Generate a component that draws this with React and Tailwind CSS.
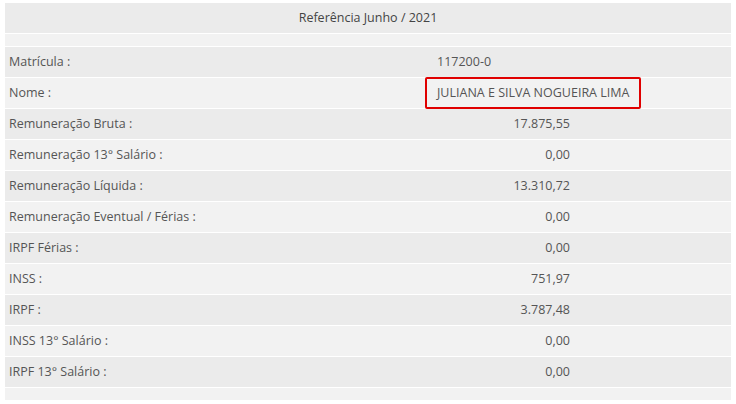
import React from "react";

const rows = [
  ["Matrícula :", "117200-0", "left"],
  ["Nome :", "JULIANA E SILVA NOGUEIRA LIMA", "left"],
  ["Remuneração Bruta :", "17.875,55", "right"],
  ["Remuneração 13° Salário :", "0,00", "right"],
  ["Remuneração Líquida :", "13.310,72", "right"],
  ["Remuneração Eventual / Férias :", "0,00", "right"],
  ["IRPF Férias :", "0,00", "right"],
  ["INSS :", "751,97", "right"],
  ["IRPF :", "3.787,48", "right"],
  ["INSS 13° Salário :", "0,00", "right"],
  ["IRPF 13° Salário :", "0,00", "right"],
];

export default function App() {
  return (
    <div
      className="w-[736px] h-[404px] bg-white overflow-hidden text-[12.5px] text-[#555]"
      style={{ fontFamily: '"Open Sans", "Noto Sans", sans-serif' }}
    >
      <div className="relative mx-[5px] mt-[3px] flex flex-col gap-px">
        <div className="h-[30px] bg-[#ebebeb] flex items-center justify-center text-[#444]">
          Referência Junho / 2021
        </div>
        <div className="h-[12px] bg-[#f2f2f2]" />
        {rows.map(([label, value, align], i) => (
          <div
            key={label}
            className={`h-[30px] flex items-center ${i % 2 === 0 ? "bg-[#ebebeb]" : "bg-[#f2f2f2]"}`}
          >
            <div className="w-[427px] pl-[4px] whitespace-nowrap">{label}</div>
            <div
              className={`w-[138px] whitespace-nowrap ${align === "right" ? "text-right" : "pl-[5px]"}`}
            >
              {value}
            </div>
          </div>
        ))}
        <div className="h-[12px] bg-[#f2f2f2]" />
        <div className="absolute left-[420px] top-[74px] w-[216px] h-[32px] border-2 border-[#e00000] rounded-[2px]" />
      </div>
    </div>
  );
}
